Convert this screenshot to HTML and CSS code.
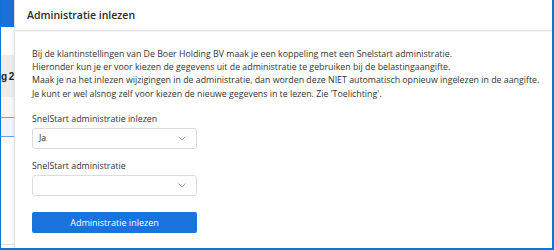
FILE: index.html
```html
<!DOCTYPE html>
<html lang="nl">
<head>
<meta charset="utf-8">
<title>Administratie inlezen</title>
<link rel="stylesheet" href="styles.css">
</head>
<body>
<div class="frame">
  <div class="backdrop">
    <div class="bd-top"></div>
    <div class="bd-gap"></div>
    <div class="bd-band"><span>g 2</span></div>
    <div class="bd-light"></div>
    <div class="bd-sel"></div>
    <div class="bd-rest"></div>
  </div>
  <div class="modal">
    <div class="modal-header">Administratie inlezen</div>
    <div class="modal-body">
      <p class="intro">Bij de klantinstellingen van De Boer Holding BV maak je een koppeling met een Snelstart administratie.<br>
      Hieronder kun je er voor kiezen de gegevens uit de administratie te gebruiken bij de belastingaangifte.<br>
      Maak je na het inlezen wijzigingen in de administratie, dan worden deze NIET automatisch opnieuw ingelezen in de aangifte.<br>
      Je kunt er wel alsnog zelf voor kiezen de nieuwe gegevens in te lezen. Zie 'Toelichting'.</p>
      <div class="field">
        <label class="label">SnelStart administratie inlezen</label>
        <div class="select"><span>Ja</span>
          <svg class="chev" width="8" height="5" viewBox="0 0 8 5"><path d="M0.5 0.5 L4 4 L7.5 0.5" fill="none" stroke="#9a9a9a" stroke-width="0.9"/></svg>
        </div>
      </div>
      <div class="field second">
        <label class="label">SnelStart administratie</label>
        <div class="select"><span></span>
          <svg class="chev" width="8" height="5" viewBox="0 0 8 5"><path d="M0.5 0.5 L4 4 L7.5 0.5" fill="none" stroke="#9a9a9a" stroke-width="0.9"/></svg>
        </div>
      </div>
      <button class="btn">Administratie inlezen</button>
    </div>
  </div>
</div>
</body>
</html>
```
FILE: styles.css
```css
html, body {
  margin: 0;
  padding: 0;
  background: #fff;
}
.frame {
  width: 554px;
  height: 250px;
  box-sizing: border-box;
  border-left: 1px solid #0a76d2;
  border-right: 2px solid #0a76d2;
  border-bottom: 2px solid #0a76d2;
  display: flex;
  overflow: hidden;
  font-family: "Open Sans", "Noto Sans", sans-serif;
  color: #333;
}
.backdrop {
  width: 13px;
  flex: none;
  display: flex;
  flex-direction: column;
  overflow: hidden;
}
.bd-top { height: 27px; background: #1d6fd8; }
.bd-gap { height: 28px; background: #fff; }
.bd-band {
  height: 42px;
  background: #ececec;
  display: flex;
  align-items: center;
  white-space: nowrap;
  font-family: "Liberation Sans", Arial, sans-serif;
  font-weight: bold;
  font-size: 10px;
  letter-spacing: -0.6px;
  color: #222;
}
.bd-band span { padding-left: 0; }
.bd-light { height: 20px; background: #f6f6f6; }
.bd-sel {
  height: 18px;
  background: #eef5fd;
  border-top: 1px solid #6aa6e6;
  border-bottom: 1px solid #6aa6e6;
}
.bd-rest {
  flex: 1;
  background: #fff;
  border-bottom: 1px solid #dedede;
  margin-bottom: 3px;
}
.modal {
  flex: 1;
  background: #fff;
  border-left: 1px solid #e2e2e2;
  box-shadow: -1px 0 2px rgba(0,0,0,0.06);
  display: flex;
  flex-direction: column;
}
.modal-header {
  height: 31px;
  box-sizing: border-box;
  padding-left: 12px;
  display: flex;
  align-items: center;
  font-weight: 600;
  font-size: 10.5px;
  color: #2a2a2a;
  border-bottom: 1px solid #e4e4e4;
  box-shadow: 0 1px 1px rgba(0,0,0,0.04);
}
.modal-body {
  padding: 17px 0 0 17px;
  font-size: 8.8px;
}
.intro {
  margin: 0 0 12px;
  line-height: 13.2px;
  color: #333;
}
.field { display: flex; flex-direction: column; }
.field.second { margin-top: 11px; }
.label {
  line-height: 13px;
  margin-bottom: 2px;
  color: #333;
}
.select {
  width: 165px;
  height: 21px;
  box-sizing: border-box;
  border: 1px solid #dcdcdc;
  border-radius: 3px;
  display: flex;
  align-items: center;
  justify-content: space-between;
  padding: 0 10px 0 6px;
  color: #333;
}
.chev { display: block; }
.btn {
  margin-top: 16px;
  width: 165px;
  height: 21px;
  border: none;
  border-radius: 2px;
  background: #1873dc;
  color: #fff;
  font-family: "Open Sans", "Noto Sans", sans-serif;
  font-size: 9px;
  padding: 0;
  display: block;
}
```
